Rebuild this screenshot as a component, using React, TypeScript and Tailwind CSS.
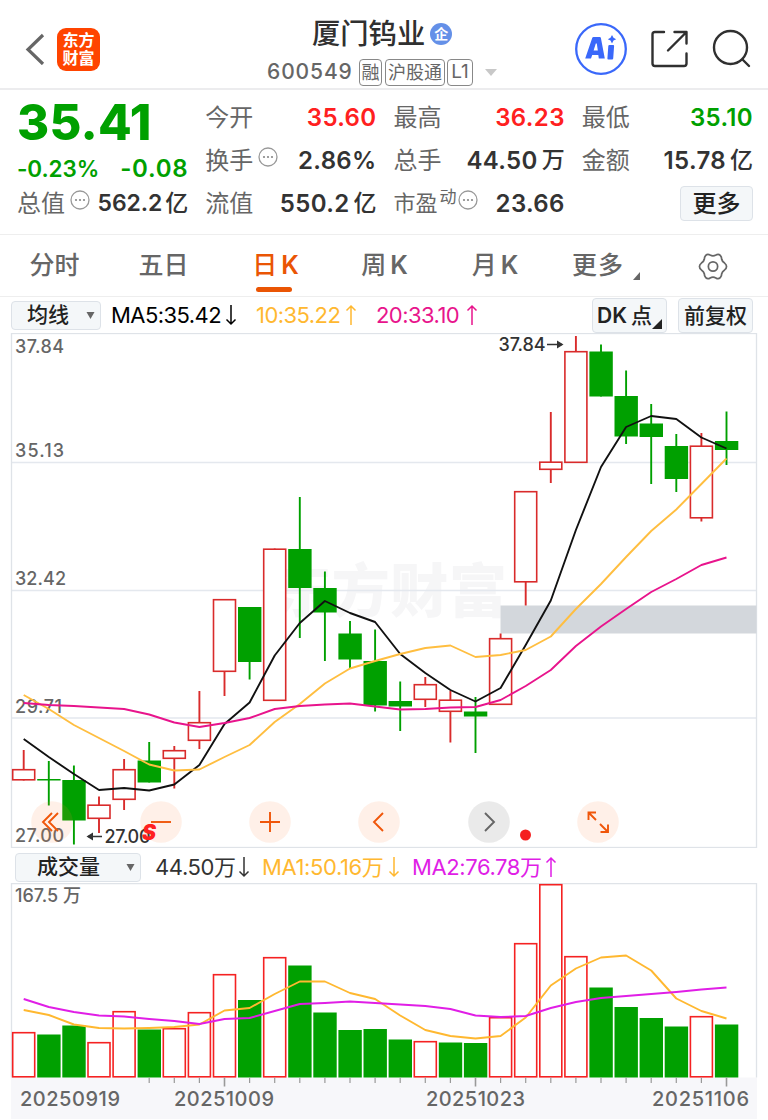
type Row = [number, number, number, number, number, number]

const X0 = 23.7
const STEP = 25.1
const GREEN = '#00a000'

// rising, high, body top, body bottom, low, volume top
const days: Row[] = [
  [1, 750, 769, 780.5, 780.5, 1032],
  [0, 761, 779, 780.5, 805.5, 1034.5],
  [0, 765.5, 780, 820.5, 844.5, 1025.5],
  [1, 796.5, 804.5, 819, 833, 1042],
  [1, 759, 769, 800, 810, 1011],
  [0, 742, 760.5, 782.5, 782.5, 1029.5],
  [1, 746, 750, 759, 788.5, 1028],
  [1, 691, 722, 741, 749, 1012],
  [1, 599, 599, 672, 696, 974],
  [0, 607, 607, 662, 679.5, 1000],
  [1, 548.5, 548.5, 701, 701, 957],
  [0, 497, 549, 588, 638, 965.5],
  [0, 571.5, 588, 612.5, 661, 1012.5],
  [0, 621, 633.5, 659.5, 668.5, 1030],
  [0, 629.5, 661, 705.5, 711.5, 1029],
  [0, 681.5, 701, 706.5, 731, 1039.5],
  [1, 677, 684, 700, 707, 1041],
  [1, 691, 699.5, 712, 742.5, 1042.5],
  [0, 697, 711.5, 716.5, 753, 1043],
  [1, 633.5, 638, 705, 705, 1017],
  [1, 491, 491, 582.5, 605.5, 943],
  [1, 412, 461.5, 470, 483, 884],
  [1, 336, 351, 463, 463, 956],
  [0, 344.5, 351.5, 396.5, 396.5, 987.5],
  [0, 370.5, 396, 436.5, 444, 1007],
  [0, 404, 423.5, 437, 484, 1018],
  [0, 434, 446, 479, 492, 1026.5],
  [1, 433, 445.5, 518.5, 521.5, 1016],
  [0, 411.5, 441, 450, 465, 1024.5],
]
// volume bars whose colour differs from the candle
const volumeGreen = [17]

const ma5 = [739, 757, 774, 790, 788, 790.5, 784.5, 765, 724, 702.5, 655.5, 623, 601, 613, 622, 654, 673, 690, 701.5, 688, 645, 600.5, 530, 467, 427, 416, 419, 437.5, 448.5]
const ma10 = [695, 709, 725, 738, 751, 764.5, 770.5, 769.5, 757, 745, 722, 704, 683.5, 668.5, 661, 654, 648, 645.5, 657, 655, 650, 636.5, 609, 584, 557, 531, 509.5, 484, 458.5]
const ma20 = [703, 705, 706, 707.5, 709, 714.5, 722.5, 727, 723, 718, 709, 706, 704.5, 703.5, 706.5, 709.5, 709, 707.5, 707, 700, 686, 670, 646, 626.5, 609, 592, 579, 565, 557.5]
const vol1 = [1010, 1015, 1024.5, 1028, 1028.5, 1028, 1027, 1024.5, 1010.5, 1008, 994, 981.5, 981.5, 993, 999, 1015.5, 1030, 1036, 1038.5, 1036, 1017.5, 985.5, 968.5, 957.5, 955.5, 970.5, 998.5, 1011, 1018.5]
const vol2 = [999, 1007, 1012, 1015.5, 1016.5, 1019, 1021, 1024, 1019, 1018, 1011, 1004, 1003, 1001.5, 1003, 1004.5, 1006, 1009, 1015.5, 1017, 1016, 1008, 1002, 998, 996, 994, 992, 989.5, 987.5]

const px = (i: number) => X0 + i * STEP

function Line({ data, color }: { data: number[]; color: string }) {
  return (
    <polyline
      points={data.map((y, i) => `${px(i)},${y}`).join(' ')}
      fill="none"
      stroke={color}
      strokeWidth={1.9}
      strokeLinejoin="round"
    />
  )
}

function Bar({ i, top, bottom, up, color }: { i: number; top: number; bottom: number; up: boolean; color: string }) {
  return up ? (
    <rect x={px(i) - 11} y={top + 0.7} width={22} height={bottom - top - 1.4} fill="#fff" stroke={color} strokeWidth={1.6} />
  ) : (
    <rect x={px(i) - 11.6} y={top} width={23.4} height={bottom - top} fill={GREEN} />
  )
}

function Dots() {
  return (
    <svg className="h-5 w-5 shrink-0" viewBox="0 0 20 20">
      <circle cx="10" cy="10" r="9" fill="none" stroke="#999" strokeWidth="1.3" />
      <circle cx="6" cy="10" r="1.1" fill="#888" />
      <circle cx="10" cy="10" r="1.1" fill="#888" />
      <circle cx="14" cy="10" r="1.1" fill="#888" />
    </svg>
  )
}

function Arrow({ down, className }: { down?: boolean; className?: string }) {
  return (
    <svg className={`h-[22px] w-3 shrink-0 ${className ?? ''}`} viewBox="0 0 12 22" fill="none" stroke="currentColor" strokeWidth="1.5">
      <path d={down ? 'M6 1V20M1.5 15.5L6 20L10.5 15.5' : 'M6 21V2M1.5 6.5L6 2L10.5 6.5'} />
    </svg>
  )
}

function Header() {
  return (
    <header className="relative flex h-[90px] shrink-0 items-center border-b-2 border-[#ececee] pt-[10px]">
      <svg className="ml-[25px] h-8 w-5" viewBox="0 0 20 32" fill="none" stroke="#666" strokeWidth="3.2">
        <path d="M18 2L3 16.5L18 31" />
      </svg>
      <div className="ml-[12px] flex h-[43px] w-[43px] flex-col items-center justify-center rounded-[9px] bg-[#ff4400] pb-px text-[16px] leading-[18px] font-bold text-white">
        <span>东方</span>
        <span>财富</span>
      </div>
      <div className="absolute top-[16px] left-[267px] w-[240px]">
        <div className="flex h-9 items-center pl-[45px]">
          <span className="text-[28.300px] leading-9 font-medium text-[#303030]">厦门钨业</span>
          <span className="ml-[5px] flex h-[22px] w-[22px] items-center justify-center rounded-full bg-[#6490e8] text-[14px] leading-none font-bold text-white">
            企
          </span>
        </div>
        <div className="mt-[6px] flex h-7 items-center text-[#666]">
          <span className="w-[92px] text-[21px] font-medium tracking-[0.9px]">600549</span>
          <span className="flex h-[27px] w-[23px] items-center justify-center rounded-[4px] border border-[#888] text-[18px]">融</span>
          <span className="ml-[3px] flex h-[27px] w-[60px] items-center justify-center rounded-[4px] border border-[#888] text-[18px]">沪股通</span>
          <span className="ml-[2px] flex h-[27px] w-[26px] items-center justify-center rounded-[4px] border border-[#888] text-[19px]">L1</span>
          <svg className="ml-3 h-[7px] w-3" viewBox="0 0 12 7">
            <path d="M0 0H12L6 7Z" fill="#c8c8c8" />
          </svg>
        </div>
      </div>
      <svg className="ml-auto h-[52px] w-[52px]" viewBox="0 0 52 52" fill="none">
        <circle cx="26" cy="26" r="24.800" stroke="#3a68fa" strokeWidth="2.300" />
        <path
          d="M10.200 35.500L17.300 14.800Q17.600 14 18.500 14H24.800Q25.700 14 25.900 14.900L29.800 35.500H23.800L23.300 32H17.200L16 35.500ZM18.600 27.500H22.800L21.800 20.500H20.800Z"
          fill="#3a68fa"
          fillRule="evenodd"
        />
        <path d="M33.300 23Q33.400 22 34.400 22H38.200Q39.200 22 39.100 23L38.200 35.500Q38.100 36.500 37.100 36.500H33.300Q32.300 36.500 32.400 35.500Z" fill="#3a68fa" />
        <path d="M37 12L38.500 14.800L41.200 16.200L38.500 17.600L37 20.400L35.500 17.600L32.800 16.200L35.500 14.800Z" fill="#3a68fa" />
      </svg>
      <svg className="ml-6 h-[38px] w-[37px]" viewBox="0 0 37 38" fill="none" stroke="#303030" strokeWidth="2.400" strokeLinecap="round" strokeLinejoin="round">
        <path d="M13 2H4Q1.500 2 1.500 4.500V33.500Q1.500 36 4 36H33Q35.500 36 35.500 33.500V23.500" />
        <path d="M23.500 2H35.500V13.500M35 2.500L17 20.500" />
      </svg>
      <svg className="mr-[17px] ml-6 h-10 w-[39px]" viewBox="0 0 39 40" fill="none" stroke="#303030" strokeWidth="2.400" strokeLinecap="round">
        <circle cx="18.500" cy="18.500" r="16.500" />
        <path d="M30.500 30.500L37 37" />
      </svg>
    </header>
  )
}

type StatProps = { label: string; value: string; unit?: string; tone?: string; dots?: boolean; tight?: boolean }

function Stat({ label, value, unit, tone, dots, tight }: StatProps) {
  return (
    <div className="flex h-[43px] items-center text-[24px]">
      <span className="text-[#666]">{label}</span>
      {dots && (
        <span className="-mt-2 ml-[5px]">
          <Dots />
        </span>
      )}
      <span
        className={`ml-auto font-semibold whitespace-nowrap ${tight ? 'text-[23px] tracking-[-0.1px]' : 'text-[24px] tracking-[0.35px]'} ${tone ?? 'text-[#333]'}`}
      >
        {value}
      </span>
      {unit && <span className={`text-[23px] font-medium text-[#333] ${tight ? 'ml-[3px]' : 'ml-[4px]'}`}>{unit}</span>}
    </div>
  )
}

function Quote() {
  return (
    <section className="grid h-[145px] shrink-0 grid-cols-4 gap-x-[17px] border-b border-[#eee] pt-[6px] pr-[15px] pl-[17px]">
      <div className="text-[#00a000]">
        <div className="h-[54px] text-[49px] leading-[54px] font-extrabold tracking-[0.2px]">35.41</div>
        <div className="flex h-8 items-center justify-between pt-[5px] leading-8 font-semibold">
          <span className="text-[22.500px] tracking-[-0.1px]">-0.23%</span>
          <span className="text-[24px] tracking-[0.7px]">-0.08</span>
        </div>
        <Stat label="总值" value="562.2" unit="亿" dots tight />
      </div>
      <div>
        <Stat label="今开" value="35.60" tone="text-[#ff2020]" />
        <Stat label="换手" value="2.86%" dots />
        <Stat label="流值" value="550.2" unit="亿" />
      </div>
      <div>
        <Stat label="最高" value="36.23" tone="text-[#ff2020]" />
        <Stat label="总手" value="44.50" unit="万" />
        <div className="flex h-[43px] items-center text-[24px]">
          <span className="text-[22px] text-[#666]">市盈</span>
          <span className="-mt-3 ml-[2px] text-[17px] text-[#666]">动</span>
          <span className="-mt-2 ml-px">
            <Dots />
          </span>
          <span className="ml-auto font-semibold tracking-[0.35px] text-[#333]">23.66</span>
        </div>
      </div>
      <div>
        <Stat label="最低" value="35.10" tone="text-[#00a000]" />
        <Stat label="金额" value="15.78" unit="亿" />
        <div className="flex h-[43px] items-center justify-end">
          <button className="h-[35px] w-[73px] rounded-[4px] border border-[#dde2e8] bg-[#f4f7f9] text-[24px] leading-8 font-medium text-[#222]">更多</button>
        </div>
      </div>
    </section>
  )
}

function KTab({ label }: { label: string }) {
  return (
    <>
      {label}
      <span className="ml-[4px] font-semibold">K</span>
    </>
  )
}

function Tabs() {
  return (
    <nav className="flex h-[62px] shrink-0 items-center border-b border-[#eee] pt-px text-[25px] font-medium text-[#666]">
      <span className="w-[109px] text-center">分时</span>
      <span className="w-[109px] text-center">五日</span>
      <span className="relative w-[115px] text-center text-[#ea5504]">
        <KTab label="日" />
        <i className="absolute -bottom-[7px] left-[38px] h-[5px] w-9 rounded-full bg-[#ea5504]" />
      </span>
      <span className="w-[103px] text-center">
        <KTab label="周" />
      </span>
      <span className="w-[118px] text-center">
        <KTab label="月" />
      </span>
      <span className="ml-[18px] w-[53px] tracking-[1px]">更多</span>
      <svg className="mt-5 ml-2 h-2 w-[7px]" viewBox="0 0 7 8">
        <path d="M7 0V8H0Z" fill="#666" />
      </svg>
      <svg className="ml-[58px] h-[29px] w-[30px]" viewBox="0 0 30 30" fill="none" stroke="#666" strokeWidth="1.800" strokeLinejoin="round">
        <circle cx="15" cy="15" r="4.800" />
        <path d="M7.500 3.500Q9.500 1.500 12 3.200Q15 4.800 18 3.200Q20.500 1.500 22.500 3.500Q24 5 24 7.500Q24.500 10 27 11.500Q29 13 29 15Q29 17 27 18.500Q24.500 20 24 22.500Q24 25 22.500 26.500Q20.500 28.500 18 26.800Q15 25.200 12 26.800Q9.500 28.500 7.500 26.500Q6 25 6 22.500Q5.500 20 3 18.500Q1 17 1 15Q1 13 3 11.500Q5.500 10 6 7.500Q6 5 7.500 3.500Z" />
      </svg>
    </nav>
  )
}

function IndicatorBar() {
  return (
    <div className="flex h-9 shrink-0 items-center pr-[15px] pl-[11px] text-[22px] tracking-[-0.55px]">
      <button className="flex h-[29px] w-[90px] items-center rounded-[4px] border border-[#dde2e8] bg-[#f4f7f9] pl-[15px] text-[21px] font-medium tracking-normal text-[#222]">
        均线
        <svg className="ml-[17px] h-[7px] w-[9px]" viewBox="0 0 8 7">
          <path d="M0 0H8L4 7Z" fill="#666" />
        </svg>
      </button>
      <span className="ml-[10px] w-[109px] whitespace-nowrap text-black">MA5:35.42</span>
      <Arrow down className="ml-[5px] text-black" />
      <span className="ml-[19px] w-[86px] whitespace-nowrap text-[#ffb830]">10:35.22</span>
      <Arrow className="ml-[3px] text-[#ffb830]" />
      <span className="ml-[19px] w-[86px] whitespace-nowrap text-[#e8148c]">20:33.10</span>
      <Arrow className="ml-[4px] text-[#e8148c]" />
      <button className="relative ml-auto flex h-[35px] w-[75px] items-center rounded-[4px] border border-[#dde2e8] bg-[#f4f7f9] pt-[2px] pl-1 text-[21px] font-medium tracking-normal whitespace-nowrap text-[#222]">
        <span className="font-semibold">DK</span>
        <span className="ml-[4px]">点</span>
        <svg className="absolute right-1 bottom-[3px] h-[10px] w-[10px]" viewBox="0 0 10 10">
          <path d="M10 0V10H0Z" fill="#222" />
        </svg>
      </button>
      <button className="ml-[11px] h-[35px] w-[75px] rounded-[4px] border border-[#dde2e8] bg-[#f4f7f9] pt-px text-[21px] font-medium tracking-normal whitespace-nowrap text-[#222]">前复权</button>
    </div>
  )
}

const tools = [
  'M21 12L12 21L21 30M27 12L18 21L27 30',
  'M11 21H31',
  'M11 21H31M21 11V31',
  'M25 12L16 21L25 30',
  'M17 12L26 21L17 30',
  'M11.500 19V11.500H19M11.500 11.500L19 19M31 23.500V31H23.500M31 31L23 23',
]

function KChart() {
  return (
    <div className="relative h-[515px] shrink-0">
      <svg className="block h-[515px] w-[768px]" viewBox="0 333 768 515">
        <text x="273" y="612" fontSize="58" fontWeight="900" fill="#f6f6f7" textLength="234">东方财富</text>
        <path d="M11.500 462.500H757M11.500 590.500H757M11.500 718H757" stroke="#e4e8ee" strokeWidth="1.500" />
        <rect x="11.500" y="333.500" width="745" height="514" fill="none" stroke="#dfe3e8" strokeWidth="1.300" />
        <rect x="500.500" y="605.500" width="256" height="28" fill="#d3d7dc" />
        {days.map(([up, high, top, bottom, low], i) => (
          <g key={i}>
            <path d={`M${px(i)} ${high}V${low}`} stroke={up ? '#d92b2b' : GREEN} strokeWidth="1.900" />
            <Bar i={i} top={top} bottom={bottom} up={!!up} color="#d92b2b" />
          </g>
        ))}
        <g fill="#666" fontSize="18" fontWeight="500">
          <text x="15" y="353" textLength="49">37.84</text>
          <text x="15" y="456.500" textLength="49">35.13</text>
          <text x="15" y="585" textLength="51">32.42</text>
          <text x="15" y="713" textLength="47">29.71</text>
          <text x="15" y="841.500" textLength="49">27.00</text>
        </g>
        <Line data={ma5} color="#111" />
        <Line data={ma10} color="#ffbe40" />
        <Line data={ma20} color="#e8148c" />
        <g fill="#333" fontSize="18" fontWeight="500">
          <text x="498.500" y="351" textLength="47">37.84</text>
          <text x="104.500" y="843" textLength="46">27.00</text>
        </g>
        <path d="M547 344.500H562M102 836.500H88" stroke="#333" strokeWidth="1.600" />
        <path d="M557 340.500L563.500 344.500L557 348.500ZM93 832.500L86.500 836.500L93 840.500Z" fill="#333" />
        <circle cx="525.500" cy="835" r="5.500" fill="#f52020" />
      </svg>
      <div className="absolute bottom-[5px] left-[30.500px] flex gap-[67.300px]">
        {tools.map((d, i) => (
          <svg key={d} className="h-[42px] w-[42px]" viewBox="0 0 42 42" fill="none" strokeWidth="1.900">
            <circle cx="21" cy="21" r="20.800" fill={i === 4 ? '#bbb' : '#ff8040'} fillOpacity={i === 4 ? 0.3 : 0.12} />
            <path d={d} stroke={i === 4 ? '#666' : '#f0560a'} />
          </svg>
        ))}
      </div>
      <span className="absolute top-[486px] left-[142px] text-[21px] leading-7 font-black text-[#ff2020] italic">S</span>
    </div>
  )
}

function VolumeBar() {
  return (
    <div className="flex h-[35px] shrink-0 items-center pt-[3px] pl-[15px] text-[22px] tracking-[-0.4px]">
      <button className="flex h-[29px] w-[126px] items-center rounded-[4px] border border-[#dde2e8] bg-[#f4f7f9] pl-[21px] text-[21px] font-medium tracking-normal text-[#222]">
        成交量
        <svg className="ml-[26px] h-[7px] w-[9px]" viewBox="0 0 8 7">
          <path d="M0 0H8L4 7Z" fill="#666" />
        </svg>
      </button>
      <span className="ml-[14px] w-[78px] whitespace-nowrap text-[#333]">44.50万</span>
      <Arrow down className="ml-[5px] text-[#333]" />
      <span className="ml-[12px] w-[121px] whitespace-nowrap text-[#ffb830]">MA1:50.16万</span>
      <Arrow down className="ml-[5px] text-[#ffb830]" />
      <span className="ml-[12px] w-[128px] whitespace-nowrap text-[#e01ee6]">MA2:76.78万</span>
      <Arrow className="ml-[5px] text-[#e01ee6]" />
    </div>
  )
}

function VolumeChart() {
  return (
    <svg className="block h-[237px] w-[768px] shrink-0" viewBox="0 883 768 237">
      <rect x="11" y="1077.500" width="746" height="41.500" fill="#f7f7fa" />
      <path d="M11.500 1077.500V883.500H756.500V1077.500" fill="none" stroke="#dfe3e8" strokeWidth="1.300" />
      <text x="15" y="901.500" fontSize="18" fontWeight="500" fill="#666" textLength="66">167.5 万</text>
      {days.map(([up, , , , , top], i) => (
        <Bar key={i} i={i} top={top} bottom={1077.5} up={!!up && !volumeGreen.includes(i)} color="#f52222" />
      ))}
      {days.map((_, i) =>
        i < 5 ? null : (
          <path
            key={i}
            d={`M${px(i)} 1077.500V${i === 8 || i === 18 || i === 28 ? 1086.5 : 1083}`}
            stroke="#999"
            strokeWidth={i === 8 || i === 18 || i === 28 ? 1.6 : 1.2}
          />
        ),
      )}
      <Line data={vol1} color="#ffb830" />
      <Line data={vol2} color="#e01ee6" />
      <g fill="#666" fontSize="20" fontWeight="500">
        <text x="20" y="1105.500" textLength="100">20250919</text>
        <text x="174" y="1105.500" textLength="100">20251009</text>
        <text x="426" y="1105.500" textLength="99">20251023</text>
        <text x="652" y="1105.500" textLength="97">20251106</text>
      </g>
    </svg>
  )
}

export default function App() {
  return (
    <main className="flex h-[1120px] w-[768px] flex-col overflow-hidden bg-white font-[Inter,'Noto_Sans_CJK_SC',sans-serif]">
      <Header />
      <Quote />
      <Tabs />
      <IndicatorBar />
      <KChart />
      <VolumeBar />
      <VolumeChart />
    </main>
  )
}
